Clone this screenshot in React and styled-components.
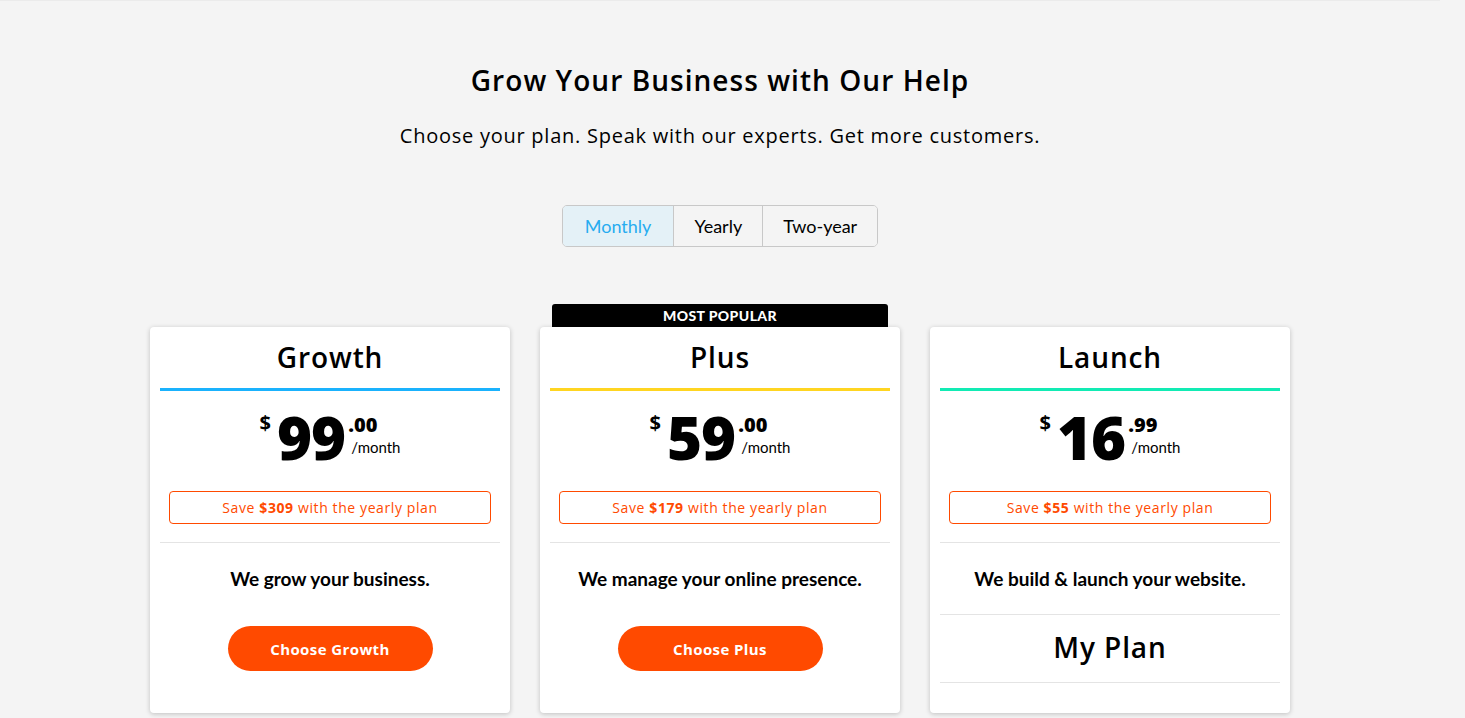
import React from "react";
import styled, { createGlobalStyle } from "styled-components";

const GlobalStyle = createGlobalStyle`
  body {
    margin: 0;
    background: #f4f4f4;
    font-family: Lato, "Liberation Sans", sans-serif;
    color: #000;
  }
  * { box-sizing: border-box; }
`;

const HEAD = `"Open Sans", "Noto Sans", sans-serif`;

const Page = styled.div`
  width: 1440px;
  min-height: 718px;
  padding-top: 60px;
  box-shadow: inset 0 1px 0 #ebebeb;
  display: flex;
  flex-direction: column;
  align-items: center;
`;

const Title = styled.h1`
  margin: 0;
  font-family: ${HEAD};
  font-size: 28px;
  font-weight: 600;
  line-height: 40px;
  letter-spacing: 1.05px;
`;

const Subtitle = styled.p`
  margin: 22px 0 0;
  font-family: ${HEAD};
  font-size: 20px;
  font-weight: 400;
  line-height: 28px;
  letter-spacing: 0.75px;
`;

const Tabs = styled.div`
  margin-top: 55px;
  display: flex;
  border: 1px solid #c8c8c8;
  border-radius: 5px;
  overflow: hidden;
`;

const Tab = styled.button`
  height: 40px;
  padding: 0 ${(p) => p.$pad}px;
  border: none;
  border-left: ${(p) => (p.$first ? "none" : "1px solid #c8c8c8")};
  background: ${(p) => (p.$active ? "#e4f1f7" : "#f4f4f4")};
  color: ${(p) => (p.$active ? "#27acf0" : "#000")};
  font-family: Lato, sans-serif;
  font-size: 18px;
  cursor: pointer;
`;

const Cards = styled.div`
  margin-top: 57px;
  display: grid;
  grid-template-columns: repeat(3, 360px);
  gap: 30px;
  align-items: start;
`;

const CardWrap = styled.div`
  position: relative;
  padding-top: 23px;
`;

const Badge = styled.div`
  position: absolute;
  top: 0;
  left: 12px;
  right: 12px;
  height: 24px;
  background: #000;
  color: #fff;
  border-radius: 3px 3px 0 0;
  font-family: Lato, sans-serif;
  font-weight: 900;
  font-size: 14px;
  line-height: 23px;
  letter-spacing: 0.4px;
  text-align: center;
`;

const Card = styled.div`
  position: relative;
  background: #fff;
  border-radius: 4px;
  box-shadow: 0 1px 5px rgba(0, 0, 0, 0.22);
  padding: 0 10px;
  height: 386px;
`;

const CardHead = styled.div`
  padding: 12px 0 13px;
  border-bottom: 3px solid ${(p) => p.$color};
  font-family: ${HEAD};
  font-size: 28px;
  font-weight: 600;
  line-height: 36px;
  letter-spacing: 0.9px;
  text-align: center;
`;

const Price = styled.div`
  display: flex;
  justify-content: center;
  align-items: flex-start;
  height: 100px;
  padding-top: 18px;
  font-family: ${HEAD};
`;

const Currency = styled.span`
  font-size: 20px;
  font-weight: 700;
  line-height: 22px;
  margin-right: 6px;
  padding-top: 3px;
`;

const Amount = styled.span`
  font-size: 60px;
  font-weight: 800;
  line-height: 56px;
  letter-spacing: -1px;
`;

const Cents = styled.div`
  display: flex;
  flex-direction: column;
  margin-left: 3px;
  padding-top: 5px;
  b {
    font-size: 20px;
    font-weight: 800;
    line-height: 22px;
  }
  span {
    font-family: Lato, sans-serif;
    font-size: 15px;
    line-height: 22px;
    margin-left: 3px;
  }
`;

const Save = styled.div`
  margin: 0 9px;
  height: 33px;
  border: 1px solid #ff4a00;
  border-radius: 4px;
  color: #ff4a00;
  font-family: ${HEAD};
  font-size: 14px;
  line-height: 31px;
  letter-spacing: 0.6px;
  text-align: center;
  b { font-weight: 700; }
`;

const Section = styled.div`
  margin-top: 18px;
  border-top: 1px solid #e4e4e4;
  padding: 24px 0 ${(p) => p.$bottom}px;
  display: flex;
  flex-direction: column;
  align-items: center;
`;

const Tagline = styled.p`
  margin: 0;
  font-family: Lato, sans-serif;
  font-size: 19px;
  font-weight: 700;
  line-height: 24px;
`;

const ChooseBtn = styled.button`
  margin-top: 35px;
  width: 205px;
  height: 45px;
  border: none;
  border-radius: 23px;
  background: #ff4a00;
  color: #fff;
  font-family: ${HEAD};
  font-size: 15px;
  font-weight: 700;
  letter-spacing: 0.4px;
  cursor: pointer;
`;

const MyPlan = styled.div`
  border-top: 1px solid #e4e4e4;
  border-bottom: 1px solid #e4e4e4;
  padding: 14px 0 17px;
  font-family: ${HEAD};
  font-size: 28px;
  font-weight: 600;
  line-height: 36px;
  letter-spacing: 0.9px;
  text-align: center;
`;

const plans = [
  { name: "Growth", color: "#1ab2fd", dollars: "99", cents: ".00", save: "$309", tag: "We grow your business." },
  { name: "Plus", color: "#ffd521", dollars: "59", cents: ".00", save: "$179", tag: "We manage your online presence.", popular: true },
  { name: "Launch", color: "#12ebb4", dollars: "16", cents: ".99", save: "$55", tag: "We build & launch your website.", current: true },
];

function PlanCard({ plan }) {
  return (
    <CardWrap>
      {plan.popular && <Badge>MOST POPULAR</Badge>}
      <Card>
        <CardHead $color={plan.color}>{plan.name}</CardHead>
        <Price>
          <Currency>$</Currency>
          <Amount>{plan.dollars}</Amount>
          <Cents>
            <b>{plan.cents}</b>
            <span>/month</span>
          </Cents>
        </Price>
        <Save>
          Save <b>{plan.save}</b> with the yearly plan
        </Save>
        <Section $bottom={plan.current ? 23 : 42}>
          <Tagline>{plan.tag}</Tagline>
          {!plan.current && <ChooseBtn>Choose {plan.name}</ChooseBtn>}
        </Section>
        {plan.current && <MyPlan>My Plan</MyPlan>}
      </Card>
    </CardWrap>
  );
}

export default function App() {
  return (
    <>
      <GlobalStyle />
      <Page>
        <Title>Grow Your Business with Our Help</Title>
        <Subtitle>Choose your plan. Speak with our experts. Get more customers.</Subtitle>
        <Tabs>
          <Tab $first $active $pad={22}>Monthly</Tab>
          <Tab $pad={20}>Yearly</Tab>
          <Tab $pad={20}>Two-year</Tab>
        </Tabs>
        <Cards>
          {plans.map((p) => (
            <PlanCard key={p.name} plan={p} />
          ))}
        </Cards>
      </Page>
    </>
  );
}
